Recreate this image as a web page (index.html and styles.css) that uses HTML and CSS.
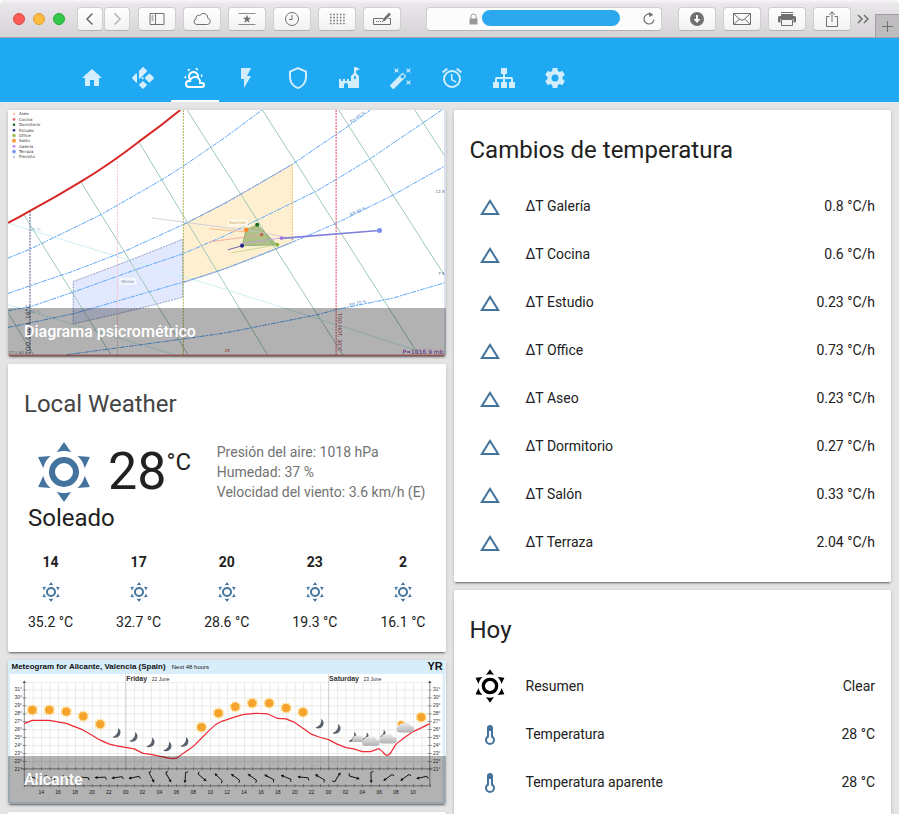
FILE: index.html
```html
<!DOCTYPE html>
<html lang="es">
<head>
<meta charset="utf-8">
<meta name="viewport" content="width=device-width, initial-scale=1">
<title>Home Assistant</title>
<link rel="stylesheet" href="styles.css">
</head>
<body>
<svg class="defs" aria-hidden="true">
  <symbol id="sunny" viewBox="0 0 24 24"><path d="M12,7A5,5 0 0,1 17,12A5,5 0 0,1 12,17A5,5 0 0,1 7,12A5,5 0 0,1 12,7M12,9A3,3 0 0,0 9,12A3,3 0 0,0 12,15A3,3 0 0,0 15,12A3,3 0 0,0 12,9M12,2L14.39,5.42C13.65,5.15 12.84,5 12,5C11.16,5 10.35,5.15 9.61,5.42L12,2M3.34,7L7.5,6.65C6.9,7.16 6.36,7.78 5.94,8.5C5.5,9.24 5.25,10 5.11,10.79L3.34,7M3.36,17L5.12,13.23C5.26,14 5.53,14.78 5.95,15.5C6.37,16.24 6.91,16.86 7.5,17.37L3.36,17M20.65,7L18.88,10.79C18.74,10 18.47,9.23 18.05,8.5C17.63,7.78 17.1,7.15 16.5,6.64L20.65,7M20.64,17L16.5,17.36C17.09,16.85 17.62,16.22 18.04,15.5C18.46,14.77 18.73,14 18.87,13.21L20.64,17M12,22L9.59,18.56C10.33,18.83 11.14,19 12,19C12.82,19 13.63,18.83 14.37,18.56L12,22Z"/></symbol>
  <symbol id="delta" viewBox="0 0 24 24"><path d="M12,7.77L18.39,18H5.61L12,7.77M12,4L2,20H22"/></symbol>
  <symbol id="thermometer" viewBox="0 0 24 24"><path d="M17,17A5,5 0 0,1 12,22A5,5 0 0,1 7,17C7,15.36 7.79,13.91 9,13V5A3,3 0 0,1 12,2A3,3 0 0,1 15,5V13C16.21,13.91 17,15.36 17,17M11,8V14.17C9.83,14.58 9,15.69 9,17A3,3 0 0,0 12,20A3,3 0 0,0 15,17C15,15.69 14.17,14.58 13,14.17V8H11Z"/></symbol>
</svg>
<div class="window">
  <div class="toolbar">
    <div class="lights"><i class="light red"></i><i class="light yellow"></i><i class="light green"></i></div>
    <div class="history">
      <button class="tool" aria-label="Atrás"><svg width="14" height="14" viewBox="0 0 14 14"><path d="M9.500 1.500L4 7l5.500 5.500" stroke-width="1.600"/></svg></button>
      <button class="tool" aria-label="Adelante"><svg class="faded" width="14" height="14" viewBox="0 0 14 14"><path d="M4.500 1.500L10 7l-5.500 5.500" stroke-width="1.600"/></svg></button>
    </div>
    <div class="tools">
      <button class="tool" aria-label="Barra lateral"><svg width="20" height="16" viewBox="0 0 20 16"><path d="M3 2.500h14v11h-14zM8.500 2.500v11M4.500 5h2M4.500 7h2M4.500 9h2"/></svg></button>
      <button class="tool" aria-label="iCloud"><svg width="20" height="16" viewBox="0 0 20 16"><path d="M4.500 13.500H15.500A3.200 3.200 0 0 0 15.800 7.200A4.300 4.300 0 0 0 7.800 4.600A2.600 2.600 0 0 0 4.200 8A2.800 2.800 0 0 0 4.500 13.500z"/></svg></button>
      <button class="tool" aria-label="Favoritos"><svg width="20" height="16" viewBox="0 0 20 16"><path d="M1.500 2.500h17M1.500 13.500h17" stroke-width=".8"/><path class="solid" d="M10 3.800l1.100 3h3l-2.400 1.900.9 3.100L10 10l-2.600 1.800.9-3.100L5.900 6.800h3z"/></svg></button>
      <button class="tool" aria-label="Historial"><svg width="20" height="16" viewBox="0 0 20 16"><circle cx="10" cy="8" r="6.500"/><path d="M10 4v4.500H7"/></svg></button>
      <button class="tool" aria-label="Sitios principales"><svg width="20" height="16" viewBox="0 0 20 16"><path d="M3 3.500h15M3 6.500h15M3 9.500h15M3 12.500h15" stroke-width="1.500" stroke-dasharray="1.500 1.800"/></svg></button>
      <button class="tool" aria-label="Autorrelleno"><svg width="20" height="16" viewBox="0 0 20 16"><path d="M11 7.500H1.500v6h17v-6h-2"/><path d="M4 10.500h7" stroke-dasharray="1 1"/><path d="M18 2.500L12 8.800" stroke-width="2.600"/><path class="solid" d="M11.500 7.500l2 2-3 1z"/></svg></button>
    </div>
    <div class="address">
      <span></span>
      <label class="site">
        <svg width="9" height="12" viewBox="0 0 9 12" aria-hidden="true"><path class="solid" d="M.5 5.500h8v6h-8z"/><path d="M2 6V3.500a2.500 2.500 0 0 1 5 0V6"/></svg>
        <input class="url" type="text" aria-label="Dirección">
      </label>
      <button class="reload" aria-label="Recargar"><svg width="14" height="14" viewBox="0 0 14 14"><path d="M12 7.500a5 5 0 1 1-3-5.100" stroke-width="1.200"/><path class="solid" d="M7 0l4.500 2.800L7.300 5z"/></svg></button>
    </div>
    <div class="tools">
      <button class="tool" aria-label="Descargas"><svg width="20" height="16" viewBox="0 0 20 16"><circle class="solid" cx="10" cy="8" r="7"/><path class="light-line" d="M10 4v5" stroke-width="2"/><path class="light-fill" d="M6.500 8h7L10 12z"/></svg></button>
      <button class="tool" aria-label="Correo"><svg width="20" height="16" viewBox="0 0 20 16"><path d="M1.500 2.500h17v11h-17zM2 3l6 5.500q2 1.500 4 0L18 3M2 13l5.500-5M18 13l-5.500-5"/></svg></button>
      <button class="tool" aria-label="Imprimir"><svg width="20" height="16" viewBox="0 0 20 16"><path d="M4 1.500h12"/><path class="solid" d="M4 3h12v2h1.500q1.500 0 1.500 1.500v4q0 1-1 1h-1.500V8h-13v3.500H2q-1 0-1-1v-4Q1 5 2.500 5H4z"/><path d="M4.500 8.500h11v6h-11z"/></svg></button>
      <button class="tool" aria-label="Compartir"><svg width="20" height="16" viewBox="0 0 20 16"><path d="M7.500 5.500h-3v10h11v-10h-3M10 11V1M7 3.700L10 .8l3 2.900"/></svg></button>
    </div>
    <button class="more" aria-label="Más"><svg width="12" height="10" viewBox="0 0 12 10"><path d="M1 1l4 4-4 4M7 1l4 4-4 4" stroke-width="1.500"/></svg></button>
    <button class="new-tab" aria-label="Nueva pestaña"><svg width="11" height="11" viewBox="0 0 11 11"><path d="M5.500 0v11M0 5.500h11"/></svg></button>
  </div>

  <nav class="tabs">
    <a class="tab" href="#casa" aria-label="Casa"><svg viewBox="0 0 24 24"><path d="M10,20V14H14V20H19V12H22L12,3L2,12H5V20H10Z"/></svg></a>
    <a class="tab" href="#kodi" aria-label="Kodi"><svg viewBox="0 0 24 24"><path d="M12 1q.5 0 .9.400L16 4.500q.5.500 0 1L9.300 12.200Q8 13.500 8 12V5.300q0-.5.400-.9L11.300 1.400Q11.600 1 12 1zM5 7.600Q6 7 6 8v8q0 1-1 .4L1.400 12.700q-.7-.7 0-1.400zM12 15l3.600 3.300q.6.600 0 1.200L12.700 22.500q-.7.700-1.400 0L8.400 19.500q-.6-.6 0-1.200zM18 7.800q.5-.3.900 0L22.600 11.300q.6.700 0 1.400L19 16.200q-.6.500-1.200 0L14.200 12.700q-.6-.7 0-1.400zM12.500 10.600v2.800L10 12.600z"/></svg></a>
    <a class="tab active" href="#tiempo" aria-label="Tiempo" aria-current="page"><svg viewBox="0 0 24 24"><path d="M12.74,5.47C15.1,6.5 16.35,9.03 15.92,11.46C17.19,12.56 18,14.19 18,16V16.17C18.31,16.06 18.65,16 19,16A3,3 0 0,1 22,19A3,3 0 0,1 19,22H6A4,4 0 0,1 2,18A4,4 0 0,1 6,14H6.27C5,12.45 4.6,10.24 5.5,8.26C6.72,5.5 9.97,4.24 12.74,5.47M11.93,7.3C10.16,6.5 8.09,7.31 7.31,9.07C6.85,10.09 6.93,11.22 7.41,12.13C8.5,10.83 10.16,10 12,10C12.7,10 13.38,10.12 14,10.34C13.94,9.06 13.18,7.86 11.93,7.3M13.55,3.64C13,3.4 12.45,3.23 11.88,3.12L14.37,1.82L15.27,4.71C14.76,4.29 14.19,3.93 13.55,3.64M6.09,4.44C5.6,4.79 5.17,5.19 4.8,5.63L4.91,2.82L7.87,3.5C7.25,3.71 6.65,4.03 6.09,4.44M18,9.71C17.91,9.12 17.78,8.55 17.59,8L19.97,9.5L17.92,11.73C18.03,11.08 18.05,10.4 18,9.71M3.04,11.3C3.11,11.9 3.24,12.47 3.43,13L1.06,11.5L3.1,9.28C3,9.93 2.97,10.61 3.04,11.3M19,18H16V16A4,4 0 0,0 12,12A4,4 0 0,0 8,16H6A2,2 0 0,0 4,18A2,2 0 0,0 6,20H19A1,1 0 0,0 20,19A1,1 0 0,0 19,18Z"/></svg></a>
    <a class="tab" href="#energia" aria-label="Energía"><svg viewBox="0 0 24 24"><path d="M7,2V13H10V22L17,10H13L17,2H7Z"/></svg></a>
    <a class="tab" href="#seguridad" aria-label="Seguridad"><svg viewBox="0 0 24 24"><path d="M21,11C21,16.55 17.16,21.74 12,23C6.84,21.74 3,16.55 3,11V5L12,1L21,5V11M12,21C15.75,20 19,15.54 19,11.22V6.3L12,3.18L5,6.3V11.22C5,15.54 8.25,20 12,21Z"/></svg></a>
    <a class="tab" href="#castillo" aria-label="Castillo"><svg viewBox="0 0 24 24"><path d="M2,13H4V15H6V13H8V15H10V13H12V15H14V10L17,7V1H19L23,3L19,5V7L22,10V22H11V19A2,2 0 0,0 9,17A2,2 0 0,0 7,19V22H2V13M18,10C17.45,10 17,10.54 17,11.2V13H19V11.2C19,10.54 18.55,10 18,10Z"/></svg></a>
    <a class="tab" href="#automatismos" aria-label="Automatismos"><svg viewBox="0 0 24 24"><path d="M7.5,5.6L5,7L6.4,4.5L5,2L7.5,3.4L10,2L8.6,4.5L10,7L7.5,5.6M19.5,15.4L22,14L20.6,16.5L22,19L19.5,17.6L17,19L18.4,16.5L17,14L19.5,15.4M22,2L20.6,4.5L22,7L19.5,5.6L17,7L18.4,4.5L17,2L19.5,3.4L22,2M13.34,12.78L15.78,10.34L13.66,8.22L11.22,10.66L13.34,12.78M14.37,7.29L16.71,9.63C17.1,10 17.1,10.65 16.71,11.04L5.04,22.71C4.65,23.1 4,23.1 3.63,22.71L1.29,20.37C0.9,20 0.9,19.35 1.29,18.96L12.96,7.29C13.35,6.9 14,6.9 14.37,7.29Z"/></svg></a>
    <a class="tab" href="#alarmas" aria-label="Alarmas"><svg viewBox="0 0 24 24"><path d="M12,20A7,7 0 0,1 5,13A7,7 0 0,1 12,6A7,7 0 0,1 19,13A7,7 0 0,1 12,20M12,4A9,9 0 0,0 3,13A9,9 0 0,0 12,22A9,9 0 0,0 21,13A9,9 0 0,0 12,4M12.5,8H11V14L15.75,16.85L16.5,15.62L12.5,13.25V8M7.88,3.39L6.6,1.86L2,5.71L3.29,7.24L7.88,3.39M22,5.72L17.4,1.86L16.11,3.39L20.71,7.25L22,5.72Z"/></svg></a>
    <a class="tab" href="#red" aria-label="Red"><svg viewBox="0 0 24 24"><path d="M9,2V8H11V11H5C3.89,11 3,11.89 3,13V16H1V22H7V16H5V13H11V16H9V22H15V16H13V13H19V16H17V22H23V16H21V13C21,11.89 20.11,11 19,11H13V8H15V2H9Z"/></svg></a>
    <a class="tab" href="#ajustes" aria-label="Ajustes"><svg viewBox="0 0 24 24"><path d="M12,15.5A3.5,3.5 0 0,1 8.5,12A3.5,3.5 0 0,1 12,8.5A3.5,3.5 0 0,1 15.5,12A3.5,3.5 0 0,1 12,15.5M19.43,12.97C19.47,12.65 19.5,12.33 19.5,12C19.5,11.67 19.47,11.34 19.43,11L21.54,9.37C21.73,9.22 21.78,8.95 21.66,8.73L19.66,5.27C19.54,5.05 19.27,4.96 19.05,5.05L16.56,6.05C16.04,5.66 15.5,5.32 14.87,5.07L14.5,2.42C14.46,2.18 14.25,2 14,2H10C9.75,2 9.54,2.18 9.5,2.42L9.13,5.07C8.5,5.32 7.96,5.66 7.44,6.05L4.95,5.05C4.73,4.96 4.46,5.05 4.34,5.27L2.34,8.73C2.21,8.95 2.27,9.22 2.46,9.37L4.57,11C4.53,11.34 4.5,11.67 4.5,12C4.5,12.33 4.53,12.65 4.57,12.97L2.46,14.63C2.27,14.78 2.21,15.05 2.34,15.27L4.34,18.73C4.46,18.95 4.73,19.03 4.95,18.95L7.44,17.94C7.96,18.34 8.5,18.68 9.13,18.93L9.5,21.58C9.54,21.82 9.75,22 10,22H14C14.25,22 14.46,21.82 14.5,21.58L14.87,18.93C15.5,18.67 16.04,18.34 16.56,17.94L19.05,18.95C19.27,19.03 19.54,18.95 19.66,18.73L21.66,15.27C21.78,15.05 21.73,14.78 21.54,14.63L19.43,12.97Z"/></svg></a>
  </nav>

  <main class="columns">
    <div class="column">
      <figure class="card picture">
        <svg class="chart" viewBox="8 110 438 246" role="img" aria-label="Diagrama psicrométrico">
          <rect x="8" y="110" width="438" height="246" fill="#fff"/>
          <path d="M183.300 225Q240 196 292.700 164.300V242.300Q240 265 183.300 283z" fill="#ffefd1"/>
          <path d="M73.300 281.700Q130 261 183 239.300V297.300Q130 312 73.300 324z" fill="#e2e9ff"/>
          <g fill="none" stroke="#9fc9b6" stroke-width="1">
            <path d="M8 312.700L33.300 355M24 215l87 140M81 182l107.300 173M139 142l128.700 213M187.300 110l156 245M262.700 110L419 355M339 110l106 165.700M415.300 110L445 155.700"/>
          </g>
          <g fill="none" stroke="#cdeff3" stroke-width="1"><path d="M8 223.300L225 289.300 421.700 352M8 305l167 50"/></g>
          <g fill="none" stroke="#5ba7f7" stroke-width="1" stroke-dasharray="5 1 2 1">
            <path d="M8 258.300L30 249.300 100.700 215 161.700 180 183.300 166.300 225 137.700 262.300 110"/>
            <path d="M8 293.700L30 286 73 271.500 124.300 251.700 182.700 225 225 203.700 292.700 164.300 349.300 125.700 370.700 110"/>
            <path d="M8 311L30 307 73.300 292.300 138.300 269 183 254 225 236 315.700 191.700 336.300 179.700 370.700 158.700 442.300 110"/>
            <path d="M8 327.700L73.300 314 183.300 282.300 225 269 292.700 242.300 336 223.700 393.300 195.300 445 166.300"/>
            <path d="M66.700 355L183.300 339.300 225 333.300 317.700 315 336 310 393.300 298.300 445 283"/>
          </g>
          <g fill="none" stroke="#8c9ac0" stroke-width="1" stroke-dasharray="2 1">
            <path d="M73.300 281.700Q130 261 183 239.300V297.300Q130 312 73.300 324z"/>
            <path d="M183.300 225Q240 196 292.700 164.300M183.300 283Q240 265 292.700 242.300"/>
            <path d="M292.700 164.300V242.300" stroke="#f3c262"/>
          </g>
          <path d="M117.500 158v197" stroke="#f3c3c9" stroke-dasharray="2 1"/>
          <path d="M183.500 110v245" stroke="#a9b04c" stroke-dasharray="2 1"/>
          <path d="M30 211v144" stroke="#6b749f" stroke-width="1.200" stroke-dasharray="2 1"/>
          <path d="M336.500 110v245" stroke="#e0455f" stroke-dasharray="2 1"/>
          <path d="M445.500 110v245" stroke="#b9c3de"/>
          <path d="M8 355.500h438" stroke="#c43a3a"/>
          <path d="M8 223Q19 217.500 30 211Q56 197 81 181.700Q111 163.500 139 141.700Q161 126 180.500 110" fill="none" stroke="#d82727" stroke-width="2"/>
          <path d="M257.500 225l20 20-35.200 1 4-16z" fill="#6f9a4b" fill-opacity=".55" stroke="#5b8c4b" stroke-width=".5"/>
          <g fill="none" stroke-width=".8">
            <path d="M152 218q60 8 110 14.500l30 6" stroke="#c7c7d8"/>
            <path d="M210 229l36 3" stroke="#f4b27a"/>
            <path d="M210 242l52-7" stroke="#f0a0a0"/>
            <path d="M228 250l14-4" stroke="#4747a0"/>
            <path d="M232 253l45-8" stroke="#b8cf80"/>
            <path d="M240 244l42-6" stroke="#c29be8"/>
            <path d="M281.700 238.500l98-7.800" stroke="#8080dc" stroke-width="1.600"/>
          </g>
          <circle cx="257.500" cy="225" r="2" fill="#1c6b1c"/><circle cx="246.500" cy="230" r="2.300" fill="#f58a2c"/>
          <circle cx="262" cy="234.800" r="1.800" fill="#c86752"/><circle cx="281.700" cy="238.300" r="1.700" fill="#9e67dc"/>
          <circle cx="277.500" cy="244.800" r="2" fill="#88b640"/><circle cx="242.300" cy="246" r="2" fill="#222288"/>
          <circle cx="380" cy="230.700" r="2.500" fill="#7a8ff0"/><circle cx="292.700" cy="239" r="1.200" fill="#aab"/>
          <g class="plot-text" font-size="4">
            <rect x="119.500" y="278" width="17" height="7" fill="#f4f6ff"/><text x="121.500" y="283" fill="#7782a8">Winter</text>
            <rect x="228" y="219.500" width="20" height="7" fill="#fff8e8"/><text x="229.500" y="224.500" fill="#c9a34c">Summer</text>
            <g fill="#4d86c4"><text transform="translate(351.500 123) rotate(-34)">RH 60 %</text><text transform="translate(351 216) rotate(-24)">RH 40 %</text><text transform="translate(350 306.500) rotate(-13)">RH 20 %</text></g>
            <text x="30" y="231" fill="#7fb7c6" font-size="4">15 °C</text><text x="30" y="313" fill="#7fb7c6" font-size="4">10 °C</text>
            <g fill="#556688" text-anchor="end"><text x="445" y="193.500">12.5</text><text x="445" y="275.500">7.5</text></g>
            <text x="8.500" y="354.500" fill="#777">17.1.80</text><text x="225" y="352" fill="#c03030">25</text>
            <text transform="translate(30 355) rotate(-90)" fill="#39415f" font-size="6">TOO COLD, 16°C</text>
            <text transform="translate(338 313) rotate(90)" fill="#a8324c" font-size="5">TOO HOT, 30°C</text>
            <text x="444" y="354" fill="#7a28a8" font-size="6" text-anchor="end">P=1016.9 mb</text>
          </g>
          <g class="plot-text" font-size="4" fill="#333">
            <circle cx="14" cy="114" r="1" fill="#f7a67c"/><text x="19" y="115.500">Aseo</text>
            <circle cx="14" cy="119.400" r="1.300" fill="#f06060"/><text x="19" y="120.900">Cocina</text>
            <circle cx="14" cy="124.800" r="1.300" fill="#1c6b1c"/><text x="19" y="126.200">Dormitorio</text>
            <circle cx="14" cy="130.200" r="1.300" fill="#222288"/><text x="19" y="131.600">Estudio</text>
            <circle cx="14" cy="135.500" r="1.700" fill="#93c050"/><text x="19" y="137">Office</text>
            <circle cx="14" cy="140.900" r="2" fill="#f99a3c"/><text x="19" y="142.400">Salón</text>
            <circle cx="14" cy="146.300" r="1.500" fill="#c08bf0"/><text x="19" y="147.700">Galería</text>
            <circle cx="14" cy="151.600" r="1.900" fill="#7d9bf2"/><text x="19" y="153.100">Terraza</text>
            <circle cx="14" cy="157" r="1" fill="#9fb9cc"/><text x="19" y="158.500">Previsto</text>
          </g>
        </svg>
        <figcaption class="caption">Diagrama psicrométrico</figcaption>
      </figure>

      <section class="card padded">
        <h2 class="title soft">Local Weather</h2>
        <div class="now">
          <div class="current">
            <svg class="now-icon"><use href="#sunny"/></svg>
            <span class="temp">28</span><span class="unit">°C</span>
          </div>
          <div class="attributes">
            <div>Presión del aire: 1018 hPa</div>
            <div>Humedad: 37 %</div>
            <div>Velocidad del viento: 3.6 km/h (E)</div>
          </div>
        </div>
        <div class="condition">Soleado</div>
        <ul class="forecast">
          <li><b>14</b><svg class="icon"><use href="#sunny"/></svg><span>35.2 °C</span></li>
          <li><b>17</b><svg class="icon"><use href="#sunny"/></svg><span>32.7 °C</span></li>
          <li><b>20</b><svg class="icon"><use href="#sunny"/></svg><span>28.6 °C</span></li>
          <li><b>23</b><svg class="icon"><use href="#sunny"/></svg><span>19.3 °C</span></li>
          <li><b>2</b><svg class="icon"><use href="#sunny"/></svg><span>16.1 °C</span></li>
        </ul>
      </section>

      <figure class="card picture">
        <svg class="chart" viewBox="8 660 438 144" role="img" aria-label="Meteogram for Alicante, Valencia (Spain)">
          <defs>
            <g id="m-sun"><path d="M0-6l1.200 2.200L3-5.200l.3 2.500 2.500-.3L4.200-1 6 0 4.200 1l1.600 2-2.500-.3L3 5.200 1.200 3.800 0 6-1.200 3.800-3 5.200l-.3-2.500-2.500.3L-4.200 1-6 0l1.800-1-1.600-2 2.500.3L-3-5.200l1.800 1.400z" fill="#fbce6a"/><circle r="3.900" fill="#f5a32c"/></g>
            <path id="m-moon" d="M1.500-5A5.200 5.200 0 0 1-4.200 4A7.500 7.500 0 0 0 1.500-5z" fill="#59606b"/>
            <linearGradient id="cloud-fill" x1="0" y1="0" x2="0" y2="1"><stop offset="0" stop-color="#ececec"/><stop offset="1" stop-color="#b2b2b2"/></linearGradient>
            <path id="m-cloud" d="M-6 5a3 3 0 0 1-.5-5.800A3.500 3.500 0 0 1-1-3.500 4.200 4.200 0 0 1 5.800-1.500 3.200 3.200 0 0 1 6 5z" fill="url(#cloud-fill)"/>
            <g id="m-wind"><path d="M-4 0h9l.8 2.500" fill="none" stroke="#111" stroke-width=".9"/><path d="M-6 0l3-1.500v3z" fill="#111"/></g>
            <pattern id="m-grid" x="24.300" y="681.750" width="8.460" height="7.930" patternUnits="userSpaceOnUse"><path d="M0 0H8.460M0 0V7.930" fill="none" stroke="#e4e4e0" stroke-width="1.400"/></pattern>
          </defs>
          <rect x="8" y="660" width="438" height="144" fill="#dceef6"/>
          <rect x="10" y="674" width="433" height="128" fill="#fff"/>
          <rect x="8" y="660" width="438" height="14" fill="#d7edf9"/>
          <rect x="24.300" y="682" width="406" height="87" fill="url(#m-grid)"/>
          <path d="M125.800 674v95M328.900 674v95" stroke="#ccc" stroke-width=".8"/>
          <path d="M24.300 682v104M430.300 682v104M21 769h412M24 786h407" fill="none" stroke="#777" stroke-width=".8"/>
          <path d="M22.500 683l1.800-2.500 1.800 2.500zM428.500 683l1.800-2.500 1.800 2.500z" fill="#555"/>
          <path d="M24.300 786h407M24.300 769h407" fill="none" stroke="#777" stroke-width="3" stroke-dasharray=".7 7.760"/>
          <path d="M24.300 689.700v80M430.300 689.700v80" fill="none" stroke="#777" stroke-width="4" stroke-dasharray=".7 7.230"/>
          <g class="meteo-text" fill="#111">
            <text x="11.500" y="669.500" font-size="8" font-weight="700">Meteogram for Alicante, Valencia (Spain)</text>
            <text x="172" y="669.500" font-size="6">Next 48 hours</text>
            <text x="428" y="670.500" font-size="11" font-weight="700">YR</text>
            <g fill="#333"><text x="126.300" y="681" font-size="7" font-weight="700">Friday</text><text x="152" y="681" font-size="5">22 June</text>
            <text x="329.500" y="681" font-size="7" font-weight="700">Saturday</text><text x="364" y="681" font-size="5">23 June</text></g>
          </g>
          <g class="meteo-text" font-size="5" fill="#333" text-anchor="end">
            <text x="22" y="691.500">31°</text><text x="22" y="699.400">30°</text><text x="22" y="707.300">29°</text><text x="22" y="715.300">28°</text><text x="22" y="723.200">27°</text><text x="22" y="731.100">26°</text><text x="22" y="739.100">25°</text><text x="22" y="747">24°</text><text x="22" y="754.900">23°</text><text x="22" y="762.900">22°</text><text x="22" y="770.800">21°</text>
            <text x="441" y="691.500">31°</text><text x="441" y="699.400">30°</text><text x="441" y="707.300">29°</text><text x="441" y="715.300">28°</text><text x="441" y="723.200">27°</text><text x="441" y="731.100">26°</text><text x="441" y="739.100">25°</text><text x="441" y="747">24°</text><text x="441" y="754.900">23°</text><text x="441" y="762.900">22°</text><text x="441" y="770.800">21°</text>
          </g>
          <g class="meteo-text" font-size="5" fill="#222" text-anchor="middle">
            <text x="41.200" y="794">14</text><text x="58.100" y="794">16</text><text x="75.100" y="794">18</text><text x="92" y="794">20</text><text x="108.900" y="794">22</text><text x="125.800" y="794">00</text><text x="142.700" y="794">02</text><text x="159.700" y="794">04</text><text x="176.600" y="794">06</text><text x="193.500" y="794">08</text><text x="210.400" y="794">10</text><text x="227.300" y="794">12</text><text x="244.300" y="794">14</text><text x="261.200" y="794">16</text><text x="278.100" y="794">18</text><text x="295" y="794">20</text><text x="311.900" y="794">22</text><text x="328.900" y="794">00</text><text x="345.800" y="794">02</text><text x="362.700" y="794">04</text><text x="379.600" y="794">06</text><text x="396.500" y="794">08</text><text x="413.500" y="794">10</text>
          </g>
          <path d="M24.300 723.700L32.300 720.500H49.300L66.300 723.500 83 730 91.700 735 100 740 108.700 744 116.700 746 125.700 747.500 134.300 749 143.300 753.500 150.700 754.500 167.700 758 172.700 758.700 176.700 758.300 184.700 752.500 193.300 746.700 201.700 738.300 210 730 216.700 724 221.700 721.500 225 720.500 235.300 717 244 714.500 256.700 713.300 268.300 714 277.700 718.500 286.300 719 295 722.500 303.300 728.300 312.300 734.500 320 737.300 329 739.700 337 744 345.700 747.500 354 749 362.700 751.700H371L379.300 748.700 383.300 752Q387.700 759 391.700 752L396.700 744 405 737.500 413.700 731.700 422.300 727.700 430.300 723.700" fill="none" stroke="#ef2b36" stroke-width="1.200" stroke-linejoin="round"/>
          <use href="#m-sun" x="32.300" y="710"/><use href="#m-sun" x="49.300" y="710"/><use href="#m-sun" x="66.300" y="711.700"/><use href="#m-sun" x="83.300" y="716.300"/><use href="#m-sun" x="100.300" y="724.300"/><use href="#m-sun" x="201.700" y="727.300"/><use href="#m-sun" x="218.700" y="713.200"/><use href="#m-sun" x="235.500" y="706.800"/><use href="#m-sun" x="252.500" y="703.200"/><use href="#m-sun" x="269.500" y="703.200"/><use href="#m-sun" x="286.400" y="708"/><use href="#m-sun" x="303.300" y="712.200"/><use href="#m-sun" x="421.700" y="717.300"/>
          <use href="#m-moon" x="116.700" y="733"/><use href="#m-moon" x="133.700" y="737"/><use href="#m-moon" x="150.700" y="742.500"/><use href="#m-moon" x="167.700" y="746.500"/><use href="#m-moon" x="184.700" y="742"/><use href="#m-moon" x="320" y="723.700"/><use href="#m-moon" x="337" y="729"/>
          <use href="#m-moon" x="353" y="737"/><use href="#m-cloud" transform="translate(358.500 738.500) scale(.7)"/>
          <use href="#m-moon" transform="translate(366 736) scale(.7)"/><use href="#m-cloud" x="371" y="741"/>
          <use href="#m-moon" transform="translate(383 733.500) scale(.7)"/><use href="#m-cloud" x="388" y="738.500"/>
          <use href="#m-sun" transform="translate(401.500 724) scale(.7)"/><use href="#m-cloud" x="405.500" y="727.500"/>
          <g>
            <use href="#m-wind" transform="translate(32.800 777.500) rotate(20)"/><use href="#m-wind" transform="translate(49.700 777.500) rotate(15)"/><use href="#m-wind" transform="translate(66.600 777.500) rotate(10)"/><use href="#m-wind" transform="translate(83.500 777.500) rotate(4)"/><use href="#m-wind" transform="translate(100.500 777.500) rotate(-3)"/><use href="#m-wind" transform="translate(117.400 777.500) rotate(-8)"/><use href="#m-wind" transform="translate(134.300 777.500) rotate(-12)"/><use href="#m-wind" transform="translate(151.600 777.500) rotate(-118)"/><use href="#m-wind" transform="translate(168.500 777.500) rotate(-120)"/><use href="#m-wind" transform="translate(185.500 777.500) rotate(-86)"/><use href="#m-wind" transform="translate(202.200 777.500) rotate(-140)"/><use href="#m-wind" transform="translate(219 777.500) rotate(44)"/><use href="#m-wind" transform="translate(235.900 777.500) rotate(36)"/><use href="#m-wind" transform="translate(252.800 777.500) rotate(36)"/><use href="#m-wind" transform="translate(269.700 777.500) rotate(28)"/><use href="#m-wind" transform="translate(286.600 777.500) rotate(22)"/><use href="#m-wind" transform="translate(303.600 777.500) rotate(6)"/><use href="#m-wind" transform="translate(320.500 777.500) rotate(30)"/><use href="#m-wind" transform="translate(337.800 777.500) rotate(122)"/><use href="#m-wind" transform="translate(354.500 777.500) rotate(196)"/><use href="#m-wind" transform="translate(371.500 777.500) rotate(-92)"/><use href="#m-wind" transform="translate(388.500 777.500) rotate(-36)"/><use href="#m-wind" transform="translate(405.500 777.500) rotate(-36)"/><use href="#m-wind" transform="translate(422.500 777.500) rotate(-12)"/>
          </g>
        </svg>
        <figcaption class="caption">Alicante</figcaption>
      </figure>
      <section class="card rest"></section>
    </div>

    <div class="column">
      <section class="card padded">
        <h2 class="title">Cambios de temperatura</h2>
        <ul class="states">
          <li><span class="badge"><svg class="icon"><use href="#delta"/></svg></span><span class="name">ΔT Galería</span><span>0.8 °C/h</span></li>
          <li><span class="badge"><svg class="icon"><use href="#delta"/></svg></span><span class="name">ΔT Cocina</span><span>0.6 °C/h</span></li>
          <li><span class="badge"><svg class="icon"><use href="#delta"/></svg></span><span class="name">ΔT Estudio</span><span>0.23 °C/h</span></li>
          <li><span class="badge"><svg class="icon"><use href="#delta"/></svg></span><span class="name">ΔT Office</span><span>0.73 °C/h</span></li>
          <li><span class="badge"><svg class="icon"><use href="#delta"/></svg></span><span class="name">ΔT Aseo</span><span>0.23 °C/h</span></li>
          <li><span class="badge"><svg class="icon"><use href="#delta"/></svg></span><span class="name">ΔT Dormitorio</span><span>0.27 °C/h</span></li>
          <li><span class="badge"><svg class="icon"><use href="#delta"/></svg></span><span class="name">ΔT Salón</span><span>0.33 °C/h</span></li>
          <li><span class="badge"><svg class="icon"><use href="#delta"/></svg></span><span class="name">ΔT Terraza</span><span>2.04 °C/h</span></li>
        </ul>
      </section>
      <section class="card padded rest">
        <h2 class="title">Hoy</h2>
        <ul class="states">
          <li><svg class="picture-badge"><use href="#sunny"/></svg><span class="name">Resumen</span><span>Clear</span></li>
          <li><span class="badge"><svg class="icon"><use href="#thermometer"/></svg></span><span class="name">Temperatura</span><span>28 °C</span></li>
          <li><span class="badge"><svg class="icon"><use href="#thermometer"/></svg></span><span class="name">Temperatura aparente</span><span>28 °C</span></li>
        </ul>
      </section>
    </div>
  </main>
</div>
</body>
</html>
```
FILE: styles.css
```css
* { box-sizing: border-box; }

body {
  margin: 0;
  background: #fff;
  color: #212121;
  font: 14px/20px Roboto, "Noto Sans", sans-serif;
}

h2, ul, figure { margin: 0; padding: 0; }
ul { list-style: none; }
button { padding: 0; border: 0; background: none; font: inherit; }
.defs { display: none; }

.window {
  display: flex;
  flex-direction: column;
  min-height: 100vh;
  overflow: hidden;
  border-radius: 5px;
  background: #e5e5e5;
}

/* Browser toolbar */
.toolbar {
  display: flex;
  align-items: center;
  height: 38px;
  padding-left: 13px;
  border-bottom: 1px solid #a69fa5;
  background: linear-gradient(#f7f5f7, #e9e7e9 4px, #d5d3d5);
}
.toolbar svg { display: block; fill: none; stroke: #707070; stroke-width: 1; }
.toolbar .solid { fill: #707070; stroke: none; }
.toolbar .light-line { stroke: #fff; }
.toolbar .light-fill { fill: #fff; stroke: none; }
.toolbar .faded { stroke: #b5b5b5; }

.lights { display: flex; gap: 8px; margin-right: 12px; }
.light { width: 12px; height: 12px; border: 1px solid; border-radius: 50%; }
.red { background: #fc5b57; border-color: #df4744; }
.yellow { background: #fdbc40; border-color: #de9f34; }
.green { background: #34c84a; border-color: #27aa35; }

.history, .tools { display: flex; }
.history { gap: 1px; margin-right: 8px; }
.tools { gap: 7px; }
.tool {
  display: grid;
  place-items: center;
  width: 38px;
  height: 24px;
  border: 1px solid #cfcdcf;
  border-bottom-color: #b5b3b5;
  border-radius: 4px;
  background: linear-gradient(#fff, #f3f2f3);
}
.history .tool { width: 26px; }

.address {
  display: grid;
  grid-template-columns: 1fr auto 1fr;
  flex: 1;
  align-items: center;
  height: 24px;
  margin: 0 16px 0 25px;
  border: 1px solid #cfcdcf;
  border-bottom-color: #b5b3b5;
  border-radius: 4px;
  background: #fcfcfc;
}
.site { display: flex; align-items: center; gap: 4px; }
.toolbar .site svg { stroke: #999; }
.toolbar .site .solid { fill: #999; }
.url {
  width: 138px;
  height: 16px;
  margin-bottom: 2px;
  padding: 0 8px;
  border: 0;
  border-radius: 8px;
  background: #2ba8ee;
  color: #fff;
  font: inherit;
}
.reload { justify-self: end; margin-right: 5px; }
.more { margin: 0 6px; }
.new-tab {
  display: grid;
  place-items: center;
  align-self: flex-end;
  width: 24px;
  height: 23px;
  border: 1px solid #a39fa3;
  border-width: 1px 0 0 1px;
  background: #bfbcbf;
}

/* View tabs */
.tabs {
  min-height: 64px;
  padding: 16px 68px 0;
  background: #1fa9f2;
}
.tab {
  display: inline-block;
  width: 48px;
  height: 48px;
  padding: 12px 12px 10px;
  border-bottom: 2px solid transparent;
  vertical-align: top;
}
.tab svg { display: block; width: 24px; height: 24px; fill: #fff; opacity: .8; }
.tab.active { border-color: #fff; }
.tab.active svg { opacity: 1; }

/* Cards */
.columns {
  display: grid;
  flex: 1;
  grid-template-columns: 1fr 1fr;
  gap: 8px;
  padding: 8px 8px 0;
}
.column { display: flex; flex-direction: column; gap: 8px; min-width: 0; }
.card {
  border-radius: 2px;
  background: #fff;
  box-shadow: 0 2px 2px rgba(0, 0, 0, .14), 0 1px 5px rgba(0, 0, 0, .12), 0 3px 1px -2px rgba(0, 0, 0, .3);
}
.padded { padding: 16px; }
.rest { flex: 1; border-radius: 2px 2px 0 0; }

.title { padding: 4px 0 12px; font-size: 24px; font-weight: 400; line-height: 40px; }
.soft { color: #444; }

.picture { position: relative; overflow: hidden; }
.chart { display: block; width: 100%; height: auto; }
.plot-text { font-family: "DejaVu Sans", sans-serif; }
.meteo-text { font-family: "Liberation Sans", sans-serif; }
.caption {
  position: absolute;
  right: 0;
  bottom: 0;
  left: 0;
  padding: 16px;
  background: rgba(0, 0, 0, .3);
  color: #fff;
  font-size: 16px;
  font-weight: 500;
  line-height: 16px;
}

.icon { width: 24px; height: 24px; fill: #44739e; vertical-align: middle; }

/* Weather */
.now { display: flex; align-items: center; justify-content: space-between; padding: 0 4px; }
.current { display: flex; }
.now-icon { width: 72px; height: 72px; margin-right: 8px; fill: #44739e; }
.temp { font-size: 52px; line-height: 72px; }
.unit { font-size: 24px; line-height: 52px; }
.attributes { color: #727272; }
.condition { padding: 0 4px; font-size: 24px; line-height: 20px; }
.forecast { display: flex; justify-content: space-between; margin-top: 24px; padding: 0 4px 4px; }
.forecast li { display: flex; flex-direction: column; align-items: center; gap: 8px; }

/* Entity rows */
.states { display: grid; gap: 8px; padding: 4px 0; }
.states li { display: flex; align-items: center; }
.badge { width: 40px; height: 40px; line-height: 40px; text-align: center; }
.picture-badge { width: 40px; height: 40px; fill: #000; }
.name { flex: 1; margin-left: 16px; }
```
